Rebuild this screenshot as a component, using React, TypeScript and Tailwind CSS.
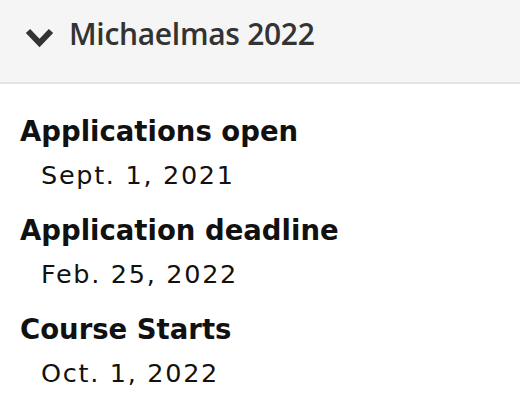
import React from 'react';

const dates = [
  { label: 'Applications open', date: 'Sept. 1, 2021' },
  { label: 'Application deadline', date: 'Feb. 25, 2022' },
  { label: 'Course Starts', date: 'Oct. 1, 2022' },
];

export default function App() {
  return (
    <div className="w-[520px] h-[417px] bg-white overflow-hidden">
      <div className="h-[84px] bg-[#f5f5f5] border-b-2 border-[#e3e3e3] flex items-center pl-[24px] pb-[10px] gap-[14px] text-[#333]">
        <svg width="31" height="21" viewBox="0 0 31 21" className="shrink-0 mt-[2px]">
          <path d="M4 4 L15.5 16 L27 4" fill="none" stroke="#333" strokeWidth="6" />
        </svg>
        <span className="text-[30px] font-['Open_Sans',sans-serif] font-semibold leading-none tracking-[-0.3px] pb-[4px]">Michaelmas 2022</span>
      </div>
      <div className="pt-[31px] pl-[20px] font-['DejaVu_Sans',Verdana,sans-serif] text-[#111]">
        {dates.map(d => (
          <div key={d.label} className="mb-[23px]">
            <div className="text-[27.5px] font-bold leading-[32px]">{d.label}</div>
            <div className="text-[25.5px] leading-[32px] pt-[12px] pl-[21px] tracking-[1.7px]">{d.date}</div>
          </div>
        ))}
      </div>
    </div>
  );
}
